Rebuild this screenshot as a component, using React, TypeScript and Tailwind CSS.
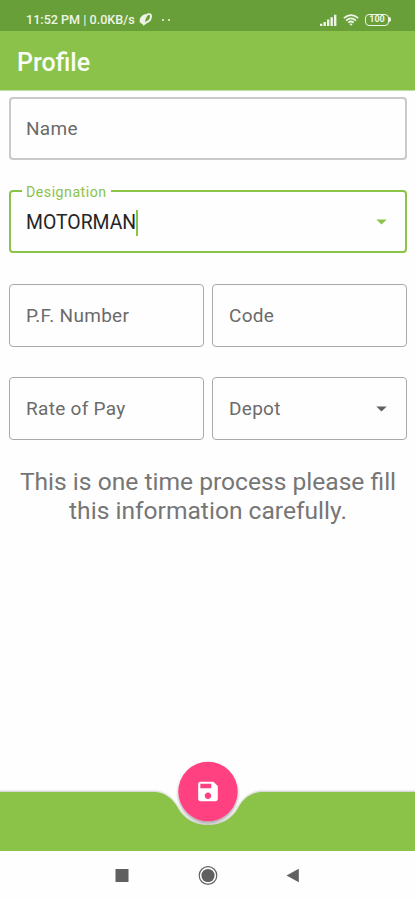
import type { ReactNode } from "react";

function Caret({ className = "" }: { className?: string }) {
  return (
    <svg className={`h-[6px] w-[11px] ${className}`} viewBox="0 0 11 6" fill="currentColor">
      <path d="M0.3 0.4h10.4L5.5 5.6z" />
    </svg>
  );
}

function Field({ label, children, wide = false }: { label: string; children?: ReactNode; wide?: boolean }) {
  return (
    <div
      className={`flex h-[63px] min-w-0 flex-1 items-center justify-between rounded-[4px] ${
        wide ? "border-2 border-[#cacaca] pr-[18px] pl-[15px]" : "border border-[#a9a9a9] pr-[19px] pl-4"
      }`}
    >
      <span className="text-[19px] leading-6 tracking-[0.3px] text-[#6b6b6b]">{label}</span>
      {children}
    </div>
  );
}

function StatusBar() {
  return (
    <header className="flex h-[31px] items-center justify-between bg-[#689f38] pt-[8px] pr-[24px] pl-[26px] text-[#eef5e6]">
      <div className="flex items-center">
        <span className="w-[110px] text-[12.6px] leading-4 font-medium whitespace-nowrap">11:52 PM | 0.0KB/s</span>
        <svg className="ml-[3px] h-[13px] w-[13px]" viewBox="0 0 13 13" fill="none" stroke="currentColor">
          <path d="M1.4 9.6C0.2 6 2.6 2.2 6.8 1.6C5 4.4 4.2 7.6 3.8 10.6Z" fill="currentColor" />
          <path d="M4.6 11.6C5 7.4 6.2 3.6 8.4 1.4Q12.2 0.4 12 3.4C11.8 6.4 10 8.6 7.4 9.2Z" strokeWidth="1.9" strokeLinejoin="round" />
        </svg>
        <span className="ml-[10px] flex gap-[4px]">
          <i className="h-[2px] w-[2px] rounded-full bg-current" />
          <i className="h-[2px] w-[2px] rounded-full bg-current" />
        </span>
      </div>
      <div className="flex items-center gap-[6px]">
        <svg className="h-[12px] w-[17px]" viewBox="0 0 17 12" fill="currentColor">
          <path d="M0 9.7h2.4V12H0zM3.5 7.9h2.4V12H3.5zM7 5.6h2.4V12H7zM10.5 3.3h2.4V12h-2.4zM14 0.8h2.4V12H14z" />
        </svg>
        <svg className="h-[12px] w-[16px]" viewBox="0 0 16 12" fill="none" stroke="currentColor" strokeWidth="1.7">
          <path d="M0.8 4.2Q8-2 15.2 4.2M3.1 6.6Q8 2.3 12.9 6.6M5.3 8.7Q8 6.3 10.7 8.7" />
          <path d="M6.4 10L8 11.7 9.6 10Q8 8.8 6.4 10Z" fill="currentColor" stroke="none" />
        </svg>
        <div className="flex items-center">
          <span className="flex h-[12px] w-[24px] items-center justify-center rounded-[4px] border-[1.5px] border-current text-[9px] leading-none font-bold">
            100
          </span>
          <i className="h-[5px] w-[2px] rounded-r-full bg-current" />
        </div>
      </div>
    </header>
  );
}

function BottomBar() {
  return (
    <div className="relative h-[60px]">
      <svg className="absolute bottom-0 left-0 h-[100px] w-[415px]" viewBox="0 0 415 100">
        <defs>
          <filter id="barShadow" x="-5%" y="-20%" width="110%" height="140%">
            <feDropShadow dx="0" dy="-0.5" stdDeviation="1.2" floodColor="#000" floodOpacity="0.28" />
          </filter>
          <filter id="buttonShadow" x="-30%" y="-30%" width="160%" height="160%">
            <feDropShadow dx="0" dy="2" stdDeviation="1.8" floodColor="#000" floodOpacity="0.38" />
          </filter>
        </defs>
        <path
          filter="url(#barShadow)"
          fill="#8bc34a"
          d="M-5 41H154C165 41 173 48 178 57C184 68 195 74 208 74C221 74 232 68 238 57C243 48 251 41 262 41H420V105H-5Z"
        />
        <circle cx="208" cy="40.5" r="29.7" fill="#ff4081" filter="url(#buttonShadow)" />
        <path
          transform="translate(194.9 27.4) scale(1.09)"
          fill="#fff"
          fillRule="evenodd"
          d="M17 3H5C3.89 3 3 3.9 3 5V19C3 20.1 3.89 21 5 21H19C20.1 21 21 20.1 21 19V7L17 3ZM12 19C10.34 19 9 17.66 9 16S10.34 13 12 13 15 14.34 15 16 13.66 19 12 19ZM15 9H5V5H15V9Z"
        />
      </svg>
    </div>
  );
}

export default function App() {
  return (
    <div className="flex h-[900px] w-[415px] flex-col overflow-hidden bg-[#fefefe] font-['Roboto',sans-serif]">
      <StatusBar />
      <div className="flex h-[60px] items-center border-b border-[#c4dda5] bg-[#8bc34a] pt-[4px] pl-[17px]">
        <h1 className="text-[25px] leading-8 font-medium text-[#fbfdf8]">Profile</h1>
      </div>
      <main className="flex flex-1 flex-col pt-[6px] pr-[8px] pl-[9px]">
        <div className="flex">
          <Field label="Name" wide />
        </div>
        <div className="relative mt-[30px] flex h-[63px] items-center justify-between rounded-[4px] border-2 border-[#8bc34a] pr-[18px] pl-[15px]">
          <span className="absolute -top-[8px] left-[11px] bg-[#fefefe] px-1 text-[14.2px] leading-4 tracking-[0.5px] text-[#8bc34a]">
            Designation
          </span>
          <div className="flex items-center pt-[2px]">
            <span className="text-[19.4px] leading-6 text-[#252525]">MOTORMAN</span>
            <i className="h-[26px] w-[2px] bg-[#8bc34a]" />
          </div>
          <Caret className="text-[#8bc34a]" />
        </div>
        <div className="mt-[31px] flex gap-[8px]">
          <Field label="P.F. Number" />
          <Field label="Code" />
        </div>
        <div className="mt-[30px] flex gap-[8px]">
          <Field label="Rate of Pay" />
          <Field label="Depot">
            <Caret className="text-[#606060]" />
          </Field>
        </div>
        <p className="mt-[27px] text-center text-[24.6px] leading-[29px] text-[#767676]">
          This is one time process please fill
          <br />
          this information carefully.
        </p>
      </main>
      <BottomBar />
      <nav className="flex h-[49px] shrink-0 items-center">
        <svg className="h-[49px] w-[415px]" viewBox="0 0 415 49" fill="#606060">
          <rect x="115.5" y="18" width="13" height="13" />
          <circle cx="208" cy="24.5" r="6.6" />
          <circle cx="208" cy="24.5" r="8.8" fill="none" stroke="#606060" strokeWidth="1.2" />
          <path d="M286.5 24.5L298.8 17.8V31.2Z" />
        </svg>
      </nav>
    </div>
  );
}
